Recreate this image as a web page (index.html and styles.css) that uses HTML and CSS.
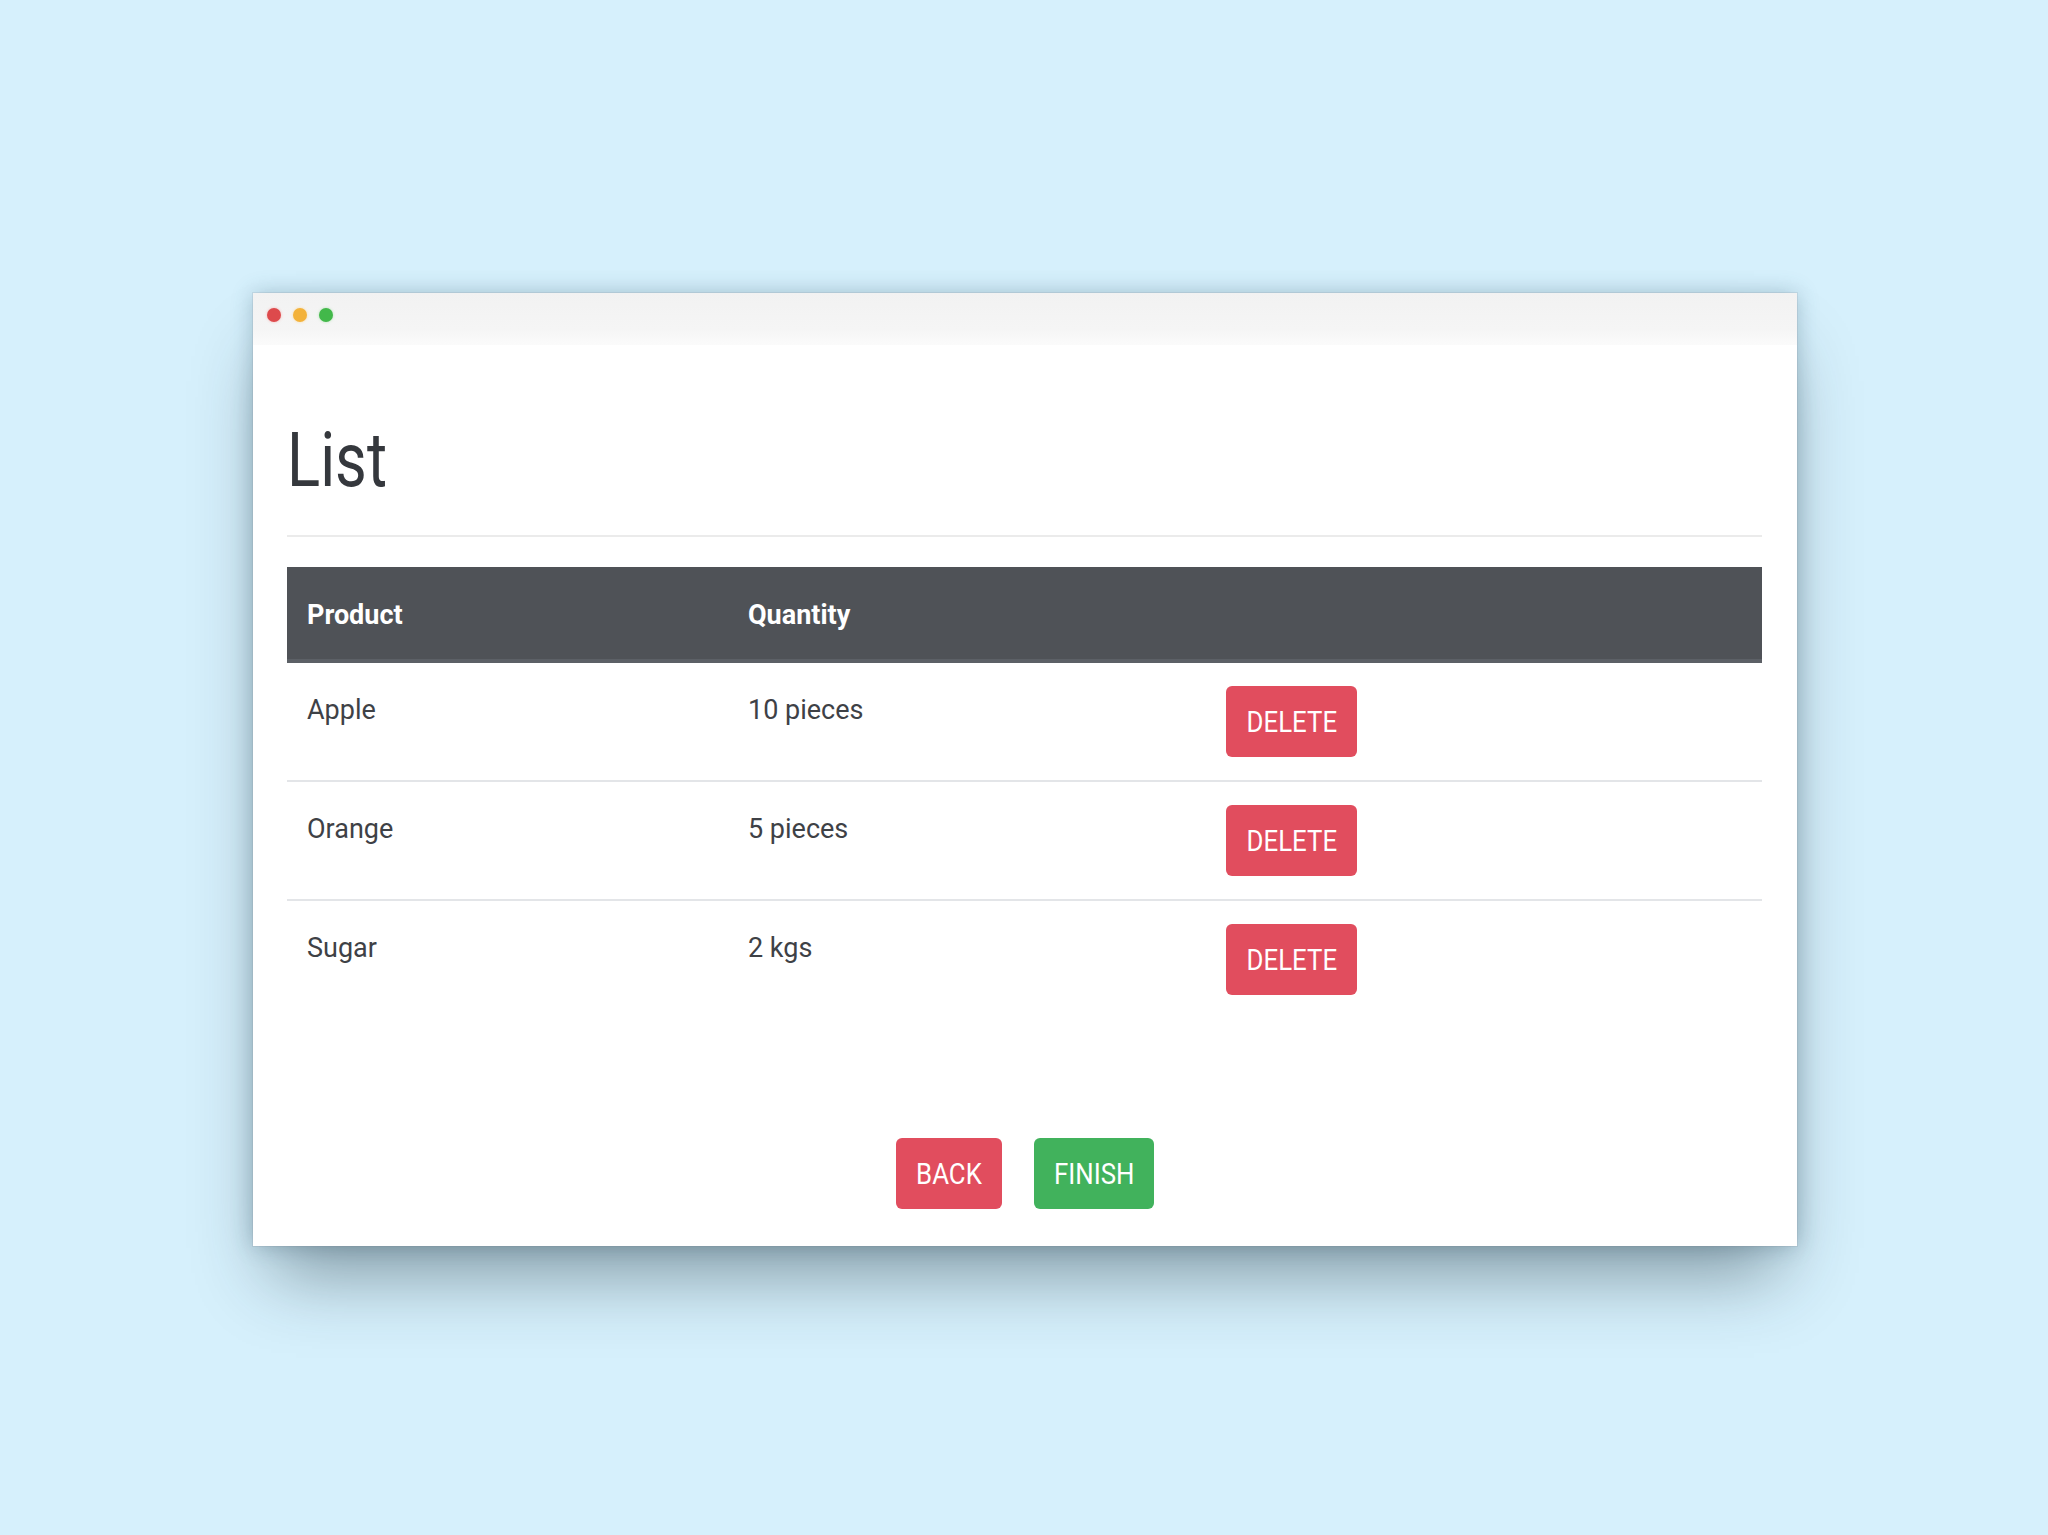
FILE: index.html
```html
<!DOCTYPE html>
<html>
<head>
<meta charset="utf-8">
<link rel="stylesheet" href="styles.css">
</head>
<body>
<div class="window">
  <div class="titlebar">
    <span class="dot red"></span>
    <span class="dot yellow"></span>
    <span class="dot green"></span>
  </div>
  <div class="content">
    <h1 class="title"><span class="sq">List</span></h1>
    <hr class="rule">
    <div class="table">
      <div class="row head">
        <div class="cell">Product</div>
        <div class="cell">Quantity</div>
        <div class="cell"></div>
      </div>
      <div class="row">
        <div class="cell">Apple</div>
        <div class="cell">10 pieces</div>
        <div class="cell action"><button class="btn btn-red btn-delete"><span class="sqc">DELETE</span></button></div>
      </div>
      <div class="row">
        <div class="cell">Orange</div>
        <div class="cell">5 pieces</div>
        <div class="cell action"><button class="btn btn-red btn-delete"><span class="sqc">DELETE</span></button></div>
      </div>
      <div class="row last">
        <div class="cell">Sugar</div>
        <div class="cell">2 kgs</div>
        <div class="cell action"><button class="btn btn-red btn-delete"><span class="sqc">DELETE</span></button></div>
      </div>
    </div>
    <div class="footer">
      <button class="btn btn-red btn-back"><span class="sqc">BACK</span></button>
      <button class="btn btn-green btn-finish"><span class="sqc">FINISH</span></button>
    </div>
  </div>
</div>
</body>
</html>
```

FILE: styles.css
```css
html, body {
  margin: 0;
  padding: 0;
}
body {
  background: #d6f0fc;
  font-family: Roboto, "Liberation Sans", sans-serif;
  width: 2048px;
  height: 1535px;
  overflow: hidden;
}
.window {
  margin: 293px 0 0 253px;
  width: 1544px;
  height: 953px;
  background: #ffffff;
  display: flex;
  flex-direction: column;
  box-shadow:
    0 0 0 1px rgba(120, 130, 140, 0.15),
    0 45px 70px -18px rgba(25, 45, 55, 0.45),
    0 0 20px rgba(60, 100, 120, 0.32);
}
.titlebar {
  height: 52px;
  flex: none;
  background: linear-gradient(#f2f2f2, #f5f5f5 70%, #fbfbfb);
  display: flex;
  align-items: center;
  padding: 0 0 8px 14px;
  box-sizing: border-box;
  gap: 12px;
}
.dot {
  width: 14px;
  height: 14px;
  border-radius: 50%;
  display: block;
}
.dot.red { background: #dd4a4c; box-shadow: 0 0 3px #f3b7b7; }
.dot.yellow { background: #f3b23a; box-shadow: 0 0 3px #f8dca7; }
.dot.green { background: #42b84a; box-shadow: 0 0 3px #b6e2b8; }
.content {
  padding: 70px 35px 0 34px;
  display: flex;
  flex-direction: column;
}
.sq {
  display: inline-block;
  transform: scaleX(0.81);
  transform-origin: left center;
  white-space: nowrap;
}
.sqc {
  display: inline-block;
  transform: scaleX(0.89);
  transform-origin: center center;
  white-space: nowrap;
}
.title {
  margin: 0;
  font-size: 76px;
  line-height: 91px;
  font-weight: 400;
  color: #35383d;
}
.rule {
  margin: 29px 0 0 0;
  border: 0;
  height: 2px;
  background: #ebebeb;
}
.table {
  margin-top: 30px;
  display: flex;
  flex-direction: column;
}
.row {
  display: grid;
  grid-template-columns: 441px 478px 1fr;
  height: 119px;
  border-bottom: 2px solid #e3e5e8;
  box-sizing: border-box;
  font-size: 27px;
  line-height: 40px;
  color: #3e4146;
  white-space: nowrap;
}
.row.last {
  border-bottom: 0;
  height: 117px;
}
.row.head {
  height: 96px;
  background: #4f5257;
  border-bottom: 4px solid #5c6066;
  color: #ffffff;
  font-weight: 700;
}
.cell {
  padding: 27px 0 0 20px;
}
.row.head .cell {
  padding-top: 28px;
}
.cell.action {
  padding-top: 23px;
}
.btn {
  border: 0;
  border-radius: 6px;
  height: 71px;
  color: #ffffff;
  font-family: Roboto, "Liberation Sans", sans-serif;
  font-size: 29px;
  font-weight: 400;
  display: flex;
  align-items: center;
  justify-content: center;
  padding: 0;
}
.btn-red { background: #e14d5e; }
.btn-green { background: #41b25c; }
.btn-delete { width: 131px; }
.btn-back { width: 106px; }
.btn-finish { width: 120px; }
.footer {
  margin-top: 120px;
  display: flex;
  justify-content: center;
  gap: 32px;
  padding-left: 1px;
}
```
